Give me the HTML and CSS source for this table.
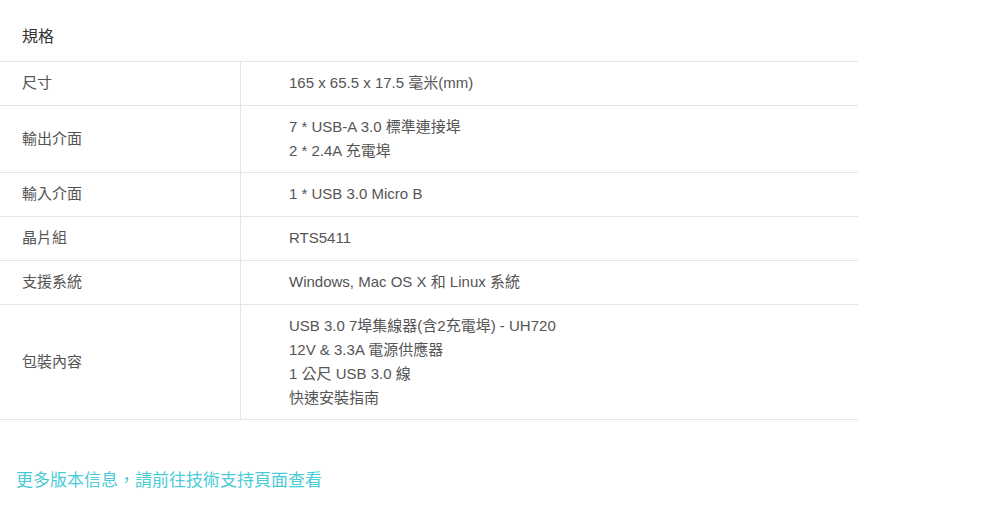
FILE: index.html
```html
<!DOCTYPE html>
<html lang="zh-Hant">
<head>
<meta charset="utf-8">
<link rel="stylesheet" href="styles.css">
</head>
<body>
<div class="spec">
  <h2 class="spec-title">規格</h2>
  <table class="spec-table">
    <tr><th>尺寸</th><td><div class="ln">165 x 65.5 x 17.5 毫米(mm)</div></td></tr>
    <tr class="multi"><th>輸出介面</th><td><div class="ln">7 * USB-A 3.0 標準連接埠</div><div class="ln">2 * 2.4A 充電埠</div></td></tr>
    <tr><th>輸入介面</th><td><div class="ln">1 * USB 3.0 Micro B</div></td></tr>
    <tr><th>晶片組</th><td><div class="ln">RTS5411</div></td></tr>
    <tr><th>支援系統</th><td><div class="ln">Windows, Mac OS X 和 Linux 系統</div></td></tr>
    <tr class="multi"><th>包裝內容</th><td><div class="ln">USB 3.0 7埠集線器(含2充電埠) - UH720</div><div class="ln">12V &amp; 3.3A 電源供應器</div><div class="ln">1 公尺 USB 3.0 線</div><div class="ln">快速安裝指南</div></td></tr>
  </table>
  <a class="more" href="#">更多版本信息，請前往技術支持頁面查看</a>
</div>
</body>
</html>
```
FILE: styles.css
```css
html, body {
  margin: 0;
  padding: 0;
  background: #fff;
}
body {
  font-family: "Liberation Sans", Arial, "Noto Sans CJK TC", sans-serif;
  color: #555;
}
.spec {
  width: 858px;
}
.spec-title {
  margin: 0;
  font-size: 16px;
  font-weight: normal;
  color: #333;
  line-height: 24px;
  padding: 25px 22px 12px;
  border-bottom: 1px solid #e5e5e5;
}
.spec-table {
  width: 858px;
  border-collapse: collapse;
  font-size: 15px;
  line-height: 24px;
}
.spec-table th,
.spec-table td {
  text-align: left;
  font-weight: normal;
  vertical-align: middle;
  padding: 9px 0 10px;
  border-bottom: 1px solid #e5e5e5;
}
.spec-table .multi th,
.spec-table .multi td {
  padding-bottom: 9px;
}
.spec-table th {
  width: 218px;
  padding-left: 22px;
  border-right: 1px solid #e5e5e5;
  color: #555;
}
.spec-table td {
  padding-left: 48px;
  color: #555;
}
.ln {
  height: 24px;
  white-space: nowrap;
}
.more {
  display: block;
  margin-top: 47px;
  padding-left: 16px;
  font-size: 17px;
  line-height: 28px;
  color: #4acbd6;
  text-decoration: none;
}
```
